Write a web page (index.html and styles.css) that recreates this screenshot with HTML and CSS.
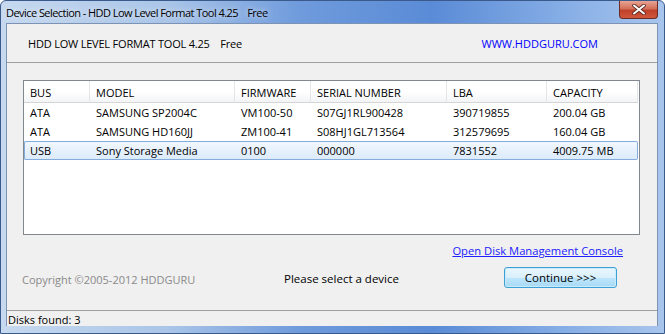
FILE: index.html
```html
<!DOCTYPE html>
<html lang="en">
<head>
    <meta charset="UTF-8">
    <title>Device Selection - HDD Low Level Format Tool 4.25</title>
    <link rel="stylesheet" href="styles.css">
</head>
<body>
    <div class="window">
        <div class="titlebar">
            <span class="title">Device Selection - HDD Low Level Format Tool 4.25&nbsp;&nbsp;&nbsp;&nbsp;Free</span>
            <div class="close-btn">
                <svg width="14" height="11" viewBox="0 0 14 11">
                    <path d="M2 1.5 L12 9.5 M12 1.5 L2 9.5" stroke="#5a2a20" stroke-width="3.6" stroke-linecap="round"/>
                    <path d="M2 1.5 L12 9.5 M12 1.5 L2 9.5" stroke="#ffffff" stroke-width="2" stroke-linecap="round"/>
                </svg>
            </div>
        </div>

        <div class="client">
            <div class="header">
                <span class="product">HDD LOW LEVEL FORMAT TOOL 4.25&nbsp;&nbsp;&nbsp;&nbsp;Free</span>
                <span class="site">WWW.HDDGURU.COM</span>
            </div>

            <div class="list">
                <table class="devices">
                    <thead>
                        <tr>
                            <th class="c-bus">BUS</th>
                            <th class="c-model">MODEL</th>
                            <th class="c-fw">FIRMWARE</th>
                            <th class="c-serial">SERIAL NUMBER</th>
                            <th class="c-lba">LBA</th>
                            <th class="c-cap">CAPACITY</th>
                        </tr>
                    </thead>
                    <tbody>
                        <tr>
                            <td>ATA</td>
                            <td>SAMSUNG SP2004C</td>
                            <td>VM100-50</td>
                            <td>S07GJ1RL900428</td>
                            <td>390719855</td>
                            <td>200.04 GB</td>
                        </tr>
                        <tr>
                            <td>ATA</td>
                            <td>SAMSUNG HD160JJ</td>
                            <td>ZM100-41</td>
                            <td>S08HJ1GL713564</td>
                            <td>312579695</td>
                            <td>160.04 GB</td>
                        </tr>
                        <tr class="selected">
                            <td>USB</td>
                            <td>Sony Storage Media</td>
                            <td>0100</td>
                            <td>000000</td>
                            <td>7831552</td>
                            <td>4009.75 MB</td>
                        </tr>
                    </tbody>
                </table>
            </div>

            <div class="link-row">
                <a href="#" class="disk-link">Open Disk Management Console</a>
            </div>

            <div class="footer">
                <span class="copyright">Copyright ©2005-2012 HDDGURU</span>
                <span class="hint">Please select a device</span>
                <button class="continue">Continue &gt;&gt;&gt;</button>
            </div>

            <div class="statusbar">Disks found: 3</div>
        </div>
    </div>
</body>
</html>
```

FILE: styles.css
```css
html, body {
    margin: 0;
    padding: 0;
    height: 100%;
    overflow: hidden;
}
body {
    font-family: "Open Sans", "Noto Sans", Arial, sans-serif;
    font-size: 11px;
    color: #000;
    background: #fff;
}
.window {
    height: 334px;
    display: flex;
    flex-direction: column;
    box-sizing: border-box;
    border: 1px solid #3a5a8c;
    border-radius: 6px 6px 0 0;
    background: linear-gradient(90deg, #c6d9ef 0%, #aac5e8 25%, #6f9bdc 45%, #5a8bd6 65%, #86aee6 85%, #a8c5ec 100%);
    padding: 0 6px 7px 5px;
}
.titlebar {
    height: 22px;
    display: flex;
    align-items: flex-start;
    justify-content: space-between;
}
.title {
    font-size: 11px;
    letter-spacing: -0.55px;
    line-height: 23px;
    color: #000;
    text-shadow: 0 0 6px rgba(255,255,255,0.9);
}
.close-btn {
    width: 39px;
    height: 18px;
    box-sizing: border-box;
    border: 1px solid #6b2a22;
    border-top: none;
    border-radius: 0 0 4px 4px;
    background: linear-gradient(180deg, #e8a493 0%, #d2705a 45%, #c0402a 55%, #d0573c 100%);
    display: flex;
    align-items: center;
    justify-content: center;
}
.client {
    flex: 1;
    display: flex;
    flex-direction: column;
    background: #f0f0f0;
    border: 1px solid #7c93b5;
    border-bottom: none;
}
.header {
    height: 38px;
    display: flex;
    align-items: center;
    justify-content: space-between;
    padding: 0 59px 0 21px;
    border-bottom: 1px solid #a0a0a0;
}
.product {
    font-size: 11px;
    letter-spacing: -0.2px;
}
.site {
    color: #0000ff;
    font-size: 11px;
}
.list {
    margin: 17px 17px 0 16px;
    height: 153px;
    background: #fff;
    border: 1px solid #828790;
}
.devices {
    border-collapse: separate;
    border-spacing: 0;
    table-layout: fixed;
    width: 614px;
}
.devices th,
.devices td {
    box-sizing: border-box;
    padding: 0 0 0 6px;
    text-align: left;
    white-space: nowrap;
    line-height: 15px;
}
.devices th {
    height: 22px;
    padding-top: 2px;
    font-weight: normal;
    background: linear-gradient(180deg, #ffffff 0%, #ffffff 50%, #f3f4f6 100%);
    border-right: 1px solid #e3e5e8;
    border-bottom: 1px solid #d5d5d5;
}
.devices td {
    height: 19px;
}
.c-bus { width: 66px; }
.c-model { width: 145px; }
.c-fw { width: 76px; }
.c-serial { width: 136px; }
.c-lba { width: 100px; }
.c-cap { width: 91px; }
.devices tr.selected td {
    background: linear-gradient(180deg, #f1f7fe 0%, #dcebfc 100%);
    border-top: 1px solid #84acdd;
    border-bottom: 1px solid #84acdd;
}
.devices tr.selected td:first-child {
    border-left: 1px solid #84acdd;
    border-radius: 2px 0 0 2px;
    padding-left: 5px;
}
.devices tr.selected td:last-child {
    border-right: 1px solid #84acdd;
    border-radius: 0 2px 2px 0;
}
.link-row {
    display: flex;
    justify-content: flex-end;
    padding: 8px 34px 0 0;
    height: 20px;
}
.disk-link {
    color: #2020ff;
    font-size: 11.2px;
}
.footer {
    display: flex;
    align-items: center;
    height: 24px;
    padding: 2px 40px 0 15px;
}
.copyright {
    color: #8a8a8a;
    font-size: 11px;
    width: 262px;
    padding-top: 4px;
}
.hint {
    font-size: 11.5px;
    flex: 1;
    padding-top: 3px;
}
.continue {
    width: 113px;
    height: 21px;
    font-family: inherit;
    font-size: 11.5px;
    color: #000;
    border: 1px solid #3c9fd6;
    border-radius: 3px;
    background: linear-gradient(180deg, #eaf6fd 0%, #d9f0fc 50%, #bee6fd 51%, #a7d9f5 100%);
    box-shadow: inset 0 0 0 1px #c8ecfb;
    padding: 0;
}
.statusbar {
    margin-top: auto;
    height: 13px;
    padding-top: 2px;
    line-height: 13px;
    border-top: 1px solid #a0a0a0;
    padding-left: 1px;
    font-size: 11px;
    background: #f0f0f0;
}
```
